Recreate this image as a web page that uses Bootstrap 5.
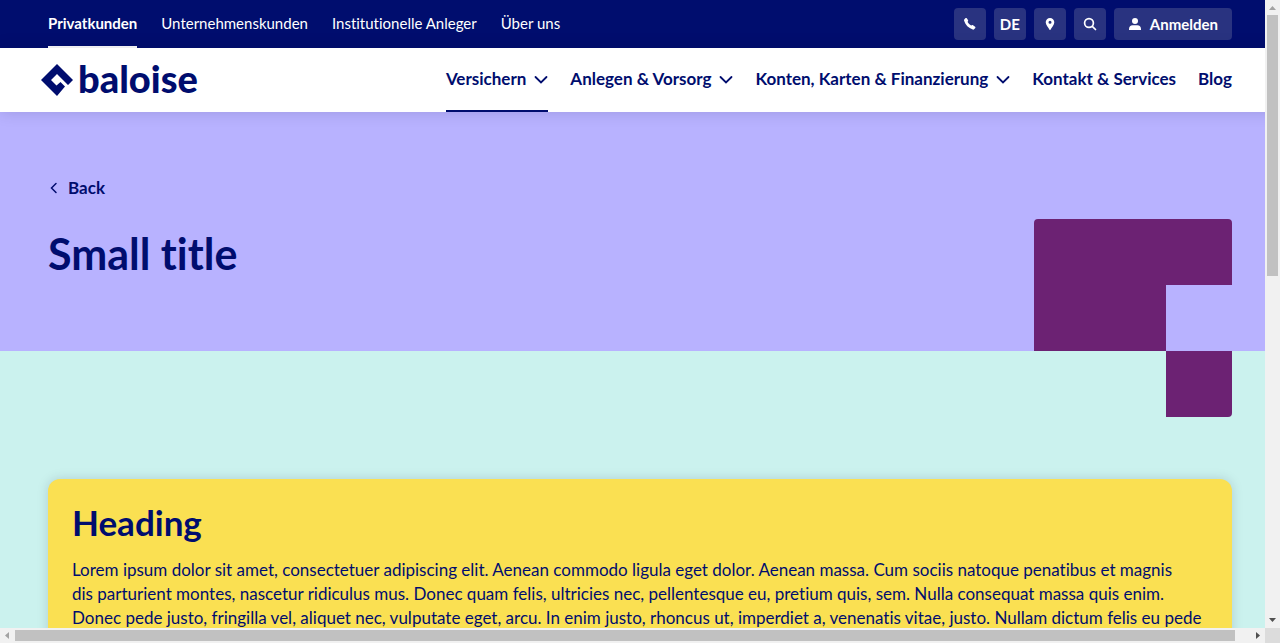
<!DOCTYPE html>
<html lang="de">
<head>
<meta charset="utf-8">
<meta name="viewport" content="width=device-width, initial-scale=1">
<title>Baloise</title>
<link rel="stylesheet" href="https://cdn.jsdelivr.net/npm/bootstrap@5.3.0/dist/css/bootstrap.min.css">
<style>
:root { --navy: #000d6e; --lavender: #b8b2ff; --mint: #cbf2ee; --yellow: #fae052; --plum: #6c2273; --bar: 15px; }
body { font-family: Lato, sans-serif; font-size: 17px; line-height: 24px; color: var(--navy); font-variant-ligatures: none; }
a { color: inherit; text-decoration: none; }
svg { display: block; flex: none; }

/* window frame with its scroll bars */
.frame { display: grid; grid-template: minmax(0, 1fr) var(--bar) / minmax(0, 1fr) var(--bar); height: 100vh; }
.view { overflow: hidden; }
.page { width: 100vw; }
.track { display: flex; align-items: center; background: #f1f1f1; }
.track-y { flex-direction: column; }
.track svg { width: 15px; height: 15px; }
.rail { flex: 1; display: flex; align-self: stretch; }
.track-y .rail { padding: 0 2px; flex-direction: column; }
.track-x .rail { padding: 2px 0; }
.thumb { background: #c1c1c1; }
.track-y .thumb { height: 43.7%; }
.track-x .thumb { width: 98.8%; }
.corner { background: #dcdcdc; }

.meta-bar { height: 48px; background: var(--navy); color: #fff; font-size: 15px; }
.main-bar { height: 64px; background: #fff; padding-left: 40px; box-shadow: 0 0 15px rgba(0, 7, 57, .15); z-index: 2; }
.tab { display: flex; align-items: center; gap: 8px; height: 100%; border-bottom: 2px solid transparent; }
.tab.active { border-color: currentColor; }
.main-nav { display: flex; gap: 22px; }
.meta-btn { height: 32px; min-width: 32px; padding: 0; border: 0; border-radius: 4px; background: #293380; color: #fff; font-size: 15px; font-weight: 700; display: flex; align-items: center; justify-content: center; gap: 8px; }
.meta-btn.login { padding: 0 14px; }
.wordmark { font-size: 38px; font-weight: 900; line-height: 40px; padding-bottom: 4px; }

.stage { background: var(--lavender); padding-top: 64px; padding-bottom: 73px; }
.stage h1 { font-size: 43px; line-height: 48px; font-weight: 700; margin: 30px 0 0; }
.shape { position: absolute; right: 48px; bottom: -66px; width: 198px; height: 198px; }
.content { background: var(--mint); padding-top: 128px; padding-bottom: 64px; }
.info { background: var(--yellow); border-radius: 12px; padding: 24px; box-shadow: 0 0 12px rgba(0, 7, 57, .15); }
.info h2 { font-size: 35px; line-height: 38px; font-weight: 700; margin: 0 0 17px; }
</style>
<script src="https://cdn.jsdelivr.net/npm/bootstrap@5.3.0/dist/js/bootstrap.bundle.min.js"></script>
</head>
<body>
<div class="frame">
  <div class="view">
    <div class="page">
      <header>
        <div class="meta-bar d-flex justify-content-between px-5">
          <nav class="d-flex gap-4" aria-label="Bereiche">
            <a class="tab active fw-bold" href="#">Privatkunden</a>
            <a class="tab" href="#">Unternehmenskunden</a>
            <a class="tab" href="#">Institutionelle Anleger</a>
            <a class="tab" href="#">Über uns</a>
          </nav>
          <div class="d-flex align-items-center gap-2">
            <button class="meta-btn" type="button" aria-label="Telefon"><svg width="14" height="14" viewBox="0 0 14 14" fill="currentColor"><path d="M1.400 2.200 2.600 1.100c.4-.3.9-.2 1.200.2l1.300 1.900c.2.4.1.8-.2 1.100l-.3.6c.9 1.500 2 2.700 3.600 3.600l.6-.3c.4-.2.8-.2 1.200.1l2.100 1.400c.4.3.5.8.2 1.200l-1 1.200c-.4.5-1 .7-1.600.5C5.400 11 2.500 8 1.100 3.800c-.2-.6-.1-1.200.3-1.600Z"/></svg></button>
            <button class="meta-btn" type="button">DE</button>
            <button class="meta-btn" type="button" aria-label="Standort"><svg width="14" height="14" viewBox="0 0 14 14" fill="currentColor"><path fill-rule="evenodd" d="M7 1a4.300 4.300 0 0 0-4.300 4.300C2.700 8 5.500 10.500 6.500 12.700c.2.4.8.4 1 0 1-2.200 3.800-4.700 3.800-7.400A4.300 4.300 0 0 0 7 1Zm0 2.800a1.500 1.500 0 1 1 0 3 1.500 1.500 0 0 1 0-3Z"/></svg></button>
            <button class="meta-btn" type="button" aria-label="Suche"><svg width="14" height="14" viewBox="0 0 14 14" fill="none" stroke="currentColor" stroke-width="1.700" stroke-linecap="round"><circle cx="6" cy="6" r="4.400"/><path d="m9.300 9.300 3.200 3.200"/></svg></button>
            <button class="meta-btn login" type="button"><svg width="14" height="14" viewBox="0 0 14 14" fill="currentColor"><circle cx="7" cy="4" r="3"/><path d="M1 13v-1c0-2.300 1.500-3.700 3.600-3.700h4.800c2.100 0 3.600 1.400 3.600 3.700v1Z"/></svg>Anmelden</button>
          </div>
        </div>
        <div class="main-bar position-relative d-flex justify-content-between pe-5">
          <a class="d-flex align-items-center gap-1" href="#">
            <svg width="34" height="34" viewBox="0 0 34 34" fill="var(--navy)"><path d="M17 1 33 17 28 22 17 11 11 17 16.500 22.500 20.500 19 25 23.500 17 33 1 17Z"/></svg>
            <span class="wordmark">baloise</span>
          </a>
          <nav class="main-nav fw-bold" aria-label="Hauptnavigation">
            <a class="tab active" href="#">Versichern <svg width="14" height="14" viewBox="0 0 14 14" fill="none" stroke="currentColor" stroke-width="1.800" stroke-linecap="round"><path d="m1.500 5 5.500 5.500 5.500-5.500"/></svg></a>
            <a class="tab" href="#">Anlegen &amp; Vorsorg <svg width="14" height="14" viewBox="0 0 14 14" fill="none" stroke="currentColor" stroke-width="1.800" stroke-linecap="round"><path d="m1.500 5 5.500 5.500 5.500-5.500"/></svg></a>
            <a class="tab" href="#">Konten, Karten &amp; Finanzierung <svg width="14" height="14" viewBox="0 0 14 14" fill="none" stroke="currentColor" stroke-width="1.800" stroke-linecap="round"><path d="m1.500 5 5.500 5.500 5.500-5.500"/></svg></a>
            <a class="tab" href="#">Kontakt &amp; Services</a>
            <a class="tab" href="#">Blog</a>
          </nav>
        </div>
      </header>
      <main>
        <section class="stage position-relative px-5">
          <a class="d-flex align-items-center gap-2 fw-bold" href="#"><svg width="12" height="12" viewBox="0 0 12 12" fill="none" stroke="currentColor" stroke-width="1.500" stroke-linecap="round"><path d="M8 1.500 3.500 6 8 10.500"/></svg>Back</a>
          <h1>Small title</h1>
          <svg class="shape" viewBox="0 0 198 198" fill="var(--plum)"><path d="M4 0h190a4 4 0 0 1 4 4v62h-66v66H0V4a4 4 0 0 1 4-4ZM132 132h66v62a4 4 0 0 1-4 4h-62Z"/></svg>
        </section>
        <section class="content px-5">
          <article class="info">
            <h2>Heading</h2>
            <p class="mb-0">Lorem ipsum dolor sit amet, consectetuer adipiscing elit. Aenean commodo ligula eget dolor. Aenean massa. Cum sociis natoque penatibus et magnis dis&nbsp;parturient montes, nascetur ridiculus mus. Donec quam felis, ultricies nec, pellentesque eu, pretium quis, sem. Nulla consequat massa quis enim. Donec pede justo, fringilla vel, aliquet nec, vulputate eget, arcu. In enim justo, rhoncus ut, imperdiet a, venenatis vitae, justo. Nullam dictum felis eu pede</p>
          </article>
        </section>
      </main>
    </div>
  </div>
  <div class="track track-y" aria-hidden="true">
    <svg viewBox="0 0 15 15" fill="#a3a3a3"><path d="M4 10h7L7.500 6Z"/></svg>
    <div class="rail"><div class="thumb"></div></div>
    <svg viewBox="0 0 15 15" fill="#505050"><path d="M4 5h7L7.500 9Z"/></svg>
  </div>
  <div class="track track-x" aria-hidden="true">
    <svg viewBox="0 0 15 15" fill="#a3a3a3"><path d="M9 4v7L5 7.500Z"/></svg>
    <div class="rail"><div class="thumb"></div></div>
    <svg viewBox="0 0 15 15" fill="#505050"><path d="M6 4v7l4-3.500Z"/></svg>
  </div>
  <div class="corner"></div>
</div>
</body>
</html>
